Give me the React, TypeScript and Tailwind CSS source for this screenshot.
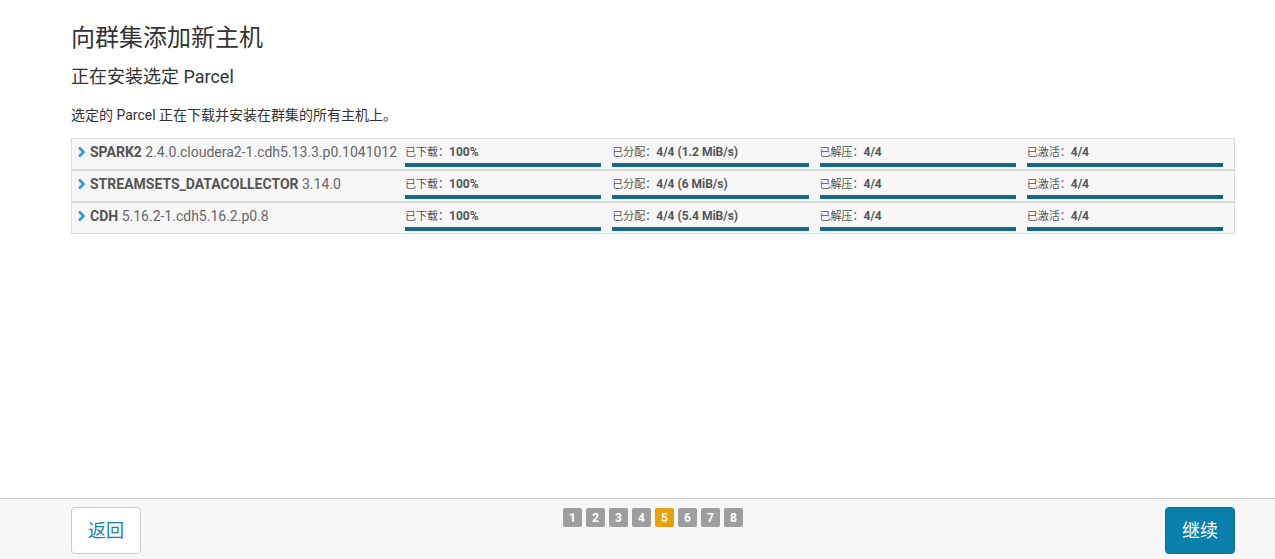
import React from "react";

const rows = [
  { name: "SPARK2", ver: "2.4.0.cloudera2-1.cdh5.13.3.p0.1041012", dist: "4/4 (1.2 MiB/s)" },
  { name: "STREAMSETS_DATACOLLECTOR", ver: "3.14.0", dist: "4/4 (6 MiB/s)" },
  { name: "CDH", ver: "5.16.2-1.cdh5.16.2.p0.8", dist: "4/4 (5.4 MiB/s)" },
];

function Chevron() {
  return (
    <svg width="9" height="12" viewBox="0 0 9 12" className="shrink-0">
      <polyline points="2,1.5 6.5,6 2,10.5" fill="none" stroke="#2b9ad6" strokeWidth="2.6" strokeLinecap="butt" strokeLinejoin="miter" />
    </svg>
  );
}

function Cell({ label, value }: { label: string; value: string }) {
  return (
    <div className="flex flex-col pt-[5px]">
      <div className="h-[16px] leading-[16px] text-[11px] text-[#555] whitespace-nowrap">
        {label}：<span className="font-bold text-[12px]">{value}</span>
      </div>
      <div className="mt-[3px] h-[4px] bg-[#17678a]" />
    </div>
  );
}

export default function App() {
  return (
    <div
      className="h-[559px] w-full flex flex-col bg-white text-[#333]"
      style={{ fontFamily: "Roboto, 'Noto Sans CJK SC', sans-serif" }}
    >
      <main className="flex-1 pl-[71px] pr-[40px] pt-[24px]">
        <h1 className="text-[24px] leading-[28px] font-normal text-[#333]">向群集添加新主机</h1>
        <h2 className="mt-[14px] text-[18px] leading-[22px] font-normal text-[#333]">正在安装选定 Parcel</h2>
        <p className="mt-[18px] text-[14px] leading-[18px] text-[#333]">选定的 Parcel 正在下载并安装在群集的所有主机上。</p>
        <div className="mt-[14px] flex flex-col">
          {rows.map((r) => (
            <div key={r.name} className="flex h-[32px] border border-[#dcdcdc] bg-[#f7f7f7]">
              <div className="w-[333px] shrink-0 flex items-center gap-[4px] pl-[5px] pt-[5px] h-[21px]">
                <Chevron />
                <span className="text-[14px] leading-[16px] text-[#666] whitespace-nowrap">
                  <span className="font-bold text-[#555]">{r.name}</span> {r.ver}
                </span>
              </div>
              <div className="flex-1 grid grid-cols-4 gap-[11px] pr-[11px]">
                <Cell label="已下载" value="100%" />
                <Cell label="已分配" value={r.dist} />
                <Cell label="已解压" value="4/4" />
                <Cell label="已激活" value="4/4" />
              </div>
            </div>
          ))}
        </div>
      </main>
      <footer className="h-[61px] shrink-0 border-t border-[#d4d4d4] bg-[#f7f7f7] pl-[71px] pr-[40px] pt-[8px] flex items-start justify-between">
        <button className="w-[70px] h-[47px] rounded-[4px] border border-[#cccccc] bg-white text-[18px] text-[#1a7fa8]">返回</button>
        <div className="flex gap-[4px] pt-[1px]">
          {[1, 2, 3, 4, 5, 6, 7, 8].map((n) => (
            <div
              key={n}
              className={
                n === 5
                  ? "w-[19px] h-[19px] rounded-[2px] bg-[#e9a10a] text-white text-[12px] font-bold flex items-center justify-center"
                  : "w-[19px] h-[19px] rounded-[2px] bg-[#9e9e9e] text-white text-[12px] font-bold flex items-center justify-center"
              }
            >
              {n}
            </div>
          ))}
        </div>
        <button className="w-[70px] h-[47px] rounded-[4px] bg-[#0b7fab] border border-[#0a6f96] text-[18px] text-white">继续</button>
      </footer>
    </div>
  );
}
